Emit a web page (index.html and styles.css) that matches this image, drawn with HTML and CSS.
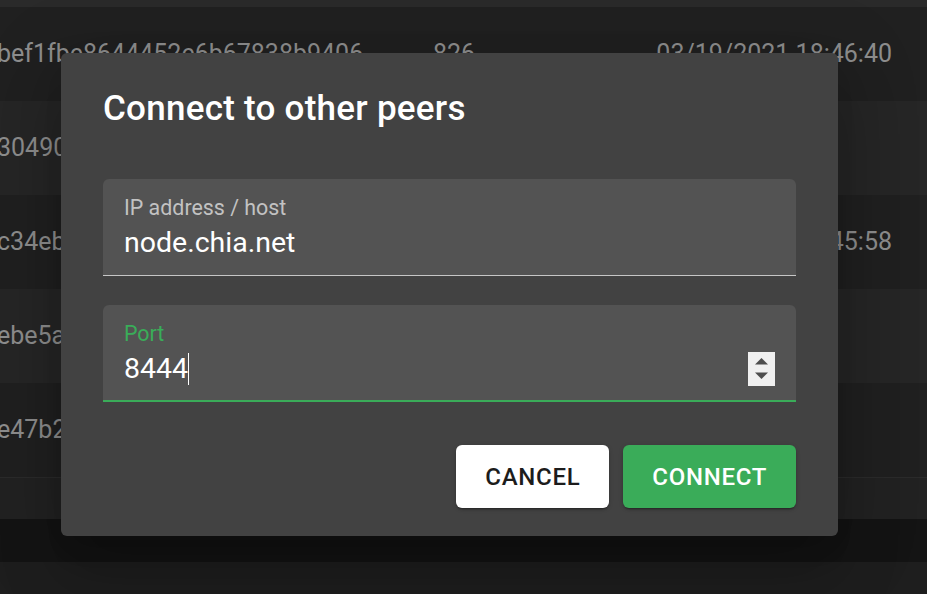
FILE: index.html
```html
<!DOCTYPE html>
<html lang="en">
<head>
<meta charset="utf-8">
<title>Connect to other peers</title>
<link rel="stylesheet" href="styles.css">
</head>
<body>
<div class="page">
  <div class="table">
    <div class="head"></div>
    <div class="row odd"><span class="c1">bef1fbe8644452e6b67838b9406</span><span class="c2">826</span><span class="c3">03/19/2021 18:46:40</span></div>
    <div class="row even"><span class="c1">30490c2a7e4b9f05d3e8a61b27</span><span class="c2">8444</span><span class="c3"></span></div>
    <div class="row odd"><span class="c1">c34eb1d09f7a26e5c8b4d3f0e1a</span><span class="c2">8444</span><span class="c3">03/19/2021 18:45:58</span></div>
    <div class="row even"><span class="c1">ebe5a8f3c27d9b0e41a6f5c8d2</span><span class="c2">8444</span><span class="c3"></span></div>
    <div class="row odd"><span class="c1">e47b2c9a0d5f8e31b6a4c7d2f9</span><span class="c2">8444</span><span class="c3"></span></div>
    <div class="foot"></div>
    <div class="pager"></div>
    <div class="rest"></div>
  </div>

  <div class="modal" role="dialog" aria-labelledby="dlg-title">
    <h2 class="modal-title" id="dlg-title">Connect to other peers</h2>
    <div class="field">
      <div class="field-label">IP address / host</div>
      <div class="field-value-row">
        <div class="field-value">node.chia.net</div>
      </div>
    </div>
    <div class="field field-focused">
      <div class="field-label">Port</div>
      <div class="field-value-row">
        <div class="field-value">8444<span class="caret"></span></div>
        <span class="spinner">
          <svg width="27" height="34" viewBox="0 0 27 34">
            <polygon points="13.5,6 20,12.5 7,12.5" fill="#4e4e4e"/>
            <polygon points="7,20.5 20,20.5 13.5,27" fill="#4e4e4e"/>
          </svg>
        </span>
      </div>
    </div>
    <div class="actions">
      <button class="btn btn-cancel">Cancel</button>
      <button class="btn btn-connect">Connect</button>
    </div>
  </div>
</div>
</body>
</html>
```

FILE: styles.css
```css
html, body {
  margin: 0;
  padding: 0;
}
body {
  background: #1e1e1e;
  font-family: Roboto, "Liberation Sans", Arial, sans-serif;
  overflow: hidden;
  width: 927px;
  height: 594px;
}
.page {
  position: relative;
  width: 927px;
  height: 594px;
  overflow: hidden;
}
.table {
  display: flex;
  flex-direction: column;
}
.head {
  height: 7px;
  background: #2a2a2a;
}
.row {
  height: 94px;
  display: grid;
  grid-template-columns: 433px 1fr auto;
  align-items: center;
  padding-right: 35px;
  font-size: 25px;
  line-height: 28px;
  color: #8e8e8e;
  white-space: nowrap;
}
.row.odd { background: #202020; }
.row.even { background: #262626; }
.c1 { margin-left: -3px; }
.foot {
  height: 41px;
  border-top: 1px solid #2b2b2b;
  background: #222222;
}
.pager {
  height: 43px;
  background: #141414;
}
.rest {
  height: 40px;
  background: #1e1e1e;
}

.modal {
  position: absolute;
  left: 61px;
  top: 53px;
  width: 777px;
  box-sizing: border-box;
  padding: 36px 42px 28px;
  background: #424242;
  border-radius: 6px;
  box-shadow: 0 18px 25px -12px rgba(0,0,0,0.2), 0 40px 63px 5px rgba(0,0,0,0.14), 0 15px 77px 13px rgba(0,0,0,0.12);
}
.modal-title {
  margin: 0 0 50px;
  font-size: 35px;
  line-height: 40px;
  font-weight: 500;
  color: #ffffff;
  letter-spacing: 0.25px;
}
.field {
  background: #535353;
  border-radius: 6px 6px 0 0;
  padding: 17px 21px 16px;
  border-bottom: 1px solid #c6c6c6;
  margin-bottom: 29px;
}
.field-focused {
  border-bottom: 2px solid #3aac59;
  padding-bottom: 15px;
  margin-bottom: 0;
}
.field-label {
  font-size: 21.4px;
  line-height: 24px;
  color: #c2c2c2;
}
.field-focused .field-label {
  color: #3aac59;
}
.field-value-row {
  display: flex;
  align-items: center;
  height: 32px;
  margin-top: 7px;
}
.field-value {
  flex: 1;
  font-size: 28.5px;
  line-height: 32px;
  color: #ffffff;
}
.caret {
  display: inline-block;
  width: 1px;
  height: 32px;
  background: #ffffff;
  vertical-align: top;
}
.spinner {
  display: block;
  flex: none;
  width: 27px;
  height: 34px;
  background: #f0f0f0;
}
.spinner svg { display: block; }
.actions {
  display: flex;
  justify-content: flex-end;
  gap: 14px;
  margin-top: 43px;
}
.btn {
  height: 63px;
  padding: 0 29px;
  border: none;
  border-radius: 6px;
  font-family: Roboto, "Liberation Sans", Arial, sans-serif;
  font-size: 24px;
  font-weight: 500;
  letter-spacing: 0.7px;
  text-transform: uppercase;
  box-shadow: 0 3px 1px -2px rgba(0,0,0,0.2), 0 2px 2px 0 rgba(0,0,0,0.14), 0 1px 5px 0 rgba(0,0,0,0.12);
}
.btn-cancel {
  background: #ffffff;
  color: #1c1c1c;
}
.btn-connect {
  background: #3aac59;
  color: #ffffff;
}
```
